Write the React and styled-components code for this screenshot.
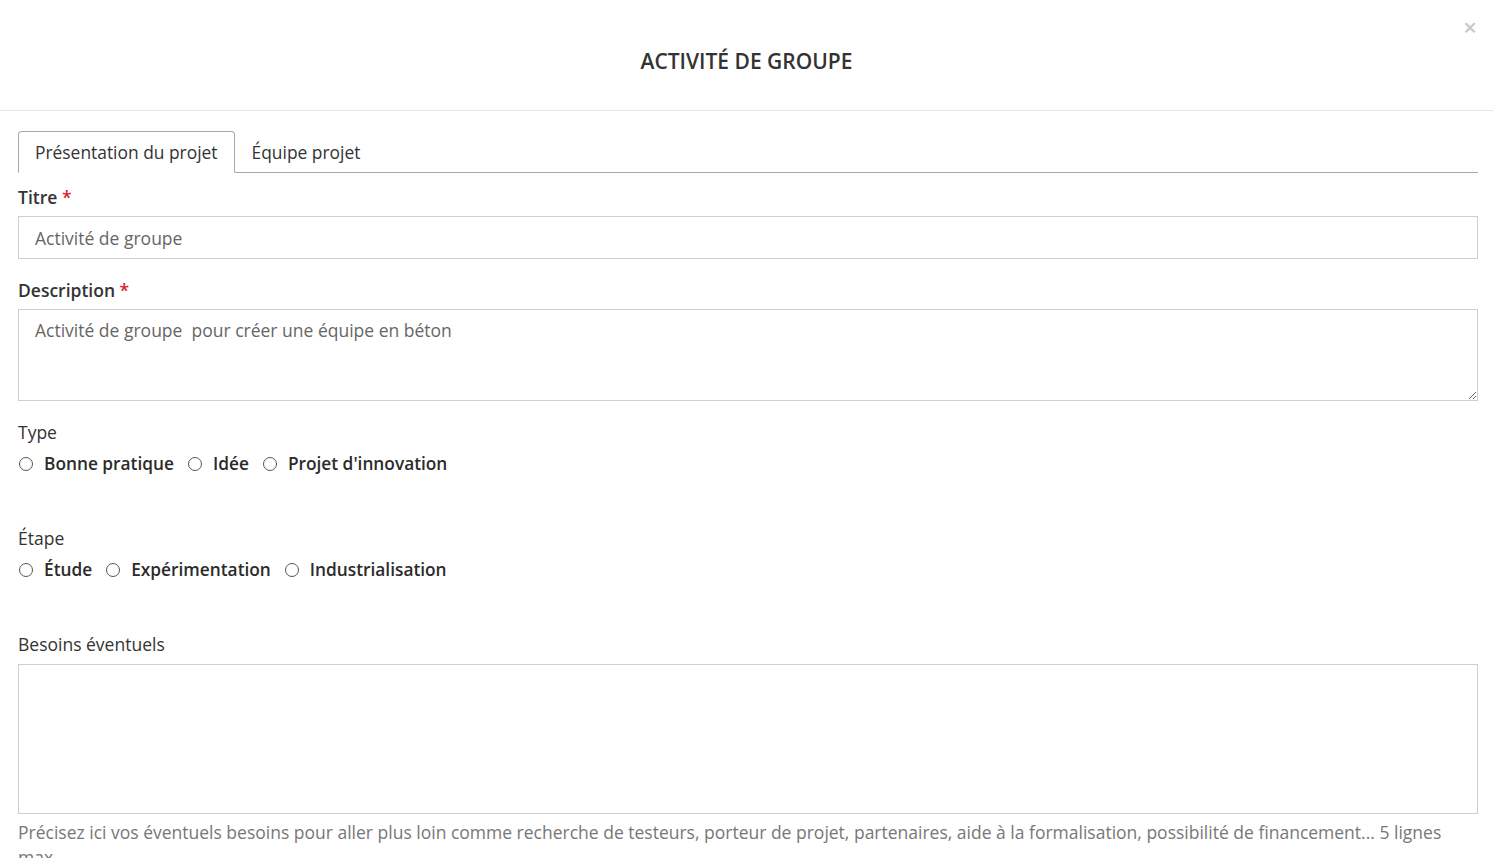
import React from "react";
import styled, { createGlobalStyle } from "styled-components";

const GlobalStyle = createGlobalStyle`
  body {
    margin: 0;
    background: #fff;
    font-family: "Open Sans", "Noto Sans", sans-serif;
    color: #333;
  }
  * { box-sizing: border-box; }
`;

const types = ["Bonne pratique", "Idée", "Projet d'innovation"];
const etapes = ["Étude", "Expérimentation", "Industrialisation"];

function App() {
  return (
    <Modal>
      <GlobalStyle />
      <Header>
        <Title>ACTIVITÉ DE GROUPE</Title>
        <Close>×</Close>
      </Header>
      <Body>
        <Tabs>
          <Tab active>Présentation du projet</Tab>
          <Tab>Équipe projet</Tab>
        </Tabs>

        <Field>
          <Label strong>
            Titre <Req>*</Req>
          </Label>
          <Input defaultValue="Activité de groupe" />
        </Field>

        <Field>
          <Label strong>
            Description <Req>*</Req>
          </Label>
          <TextArea
            h={92}
            defaultValue="Activité de groupe  pour créer une équipe en béton"
          />
        </Field>

        <Field wide>
          <Label>Type</Label>
          <RadioRow>
            {types.map((t) => (
              <RadioItem key={t}>
                <Radio type="radio" name="type" />
                {t}
              </RadioItem>
            ))}
          </RadioRow>
        </Field>

        <Field wide>
          <Label>Étape</Label>
          <RadioRow>
            {etapes.map((t) => (
              <RadioItem key={t}>
                <Radio type="radio" name="etape" />
                {t}
              </RadioItem>
            ))}
          </RadioRow>
        </Field>

        <Field>
          <Label medium gap={8}>
            Besoins éventuels
          </Label>
          <TextArea h={150} noResize />
          <Help>
            Précisez ici vos éventuels besoins pour aller plus loin comme
            recherche de testeurs, porteur de projet, partenaires, aide à la
            formalisation, possibilité de financement... 5 lignes max
          </Help>
        </Field>
      </Body>
    </Modal>
  );
}

const Modal = styled.div`
  position: relative;
  height: 858px;
  overflow: hidden;
`;

const Header = styled.div`
  height: 111px;
  display: flex;
  align-items: center;
  justify-content: center;
  border-bottom: 1px solid #e5e5e5;
`;

const Title = styled.h2`
  margin: 12px 0 0 0;
  font-size: 21px;
  font-weight: 600;
  color: #333;
`;

const Close = styled.span`
  position: absolute;
  top: 10px;
  right: 16px;
  font-size: 24px;
  font-weight: 600;
  color: #c8c8c8;
  line-height: 34px;
`;

const Body = styled.div`
  padding: 20px 15px 0 18px;
`;

const Tabs = styled.div`
  display: flex;
  border-bottom: 1px solid #a9a9a9;
`;

const Tab = styled.div`
  padding: 9px 16px 9px;
  font-size: 17.4px;
  line-height: 22px;
  color: #333;
  border: 1px solid ${(p) => (p.active ? "#a9a9a9" : "transparent")};
  border-bottom-color: ${(p) => (p.active ? "#fff" : "transparent")};
  border-radius: 4px 4px 0 0;
  margin-bottom: -1px;
  background: ${(p) => (p.active ? "#fff" : "transparent")};
`;

const Field = styled.div`
  display: flex;
  flex-direction: column;
  padding-top: 12px;
  margin-bottom: ${(p) => (p.wide ? "38px" : "7px")};
`;

const Label = styled.label`
  font-size: 17.5px;
  line-height: 24px;
  font-weight: ${(p) => (p.strong ? 600 : p.medium ? 500 : 400)};
  color: #333;
  margin-bottom: ${(p) => p.gap || 7}px;
`;

const Req = styled.span`
  color: #d9232d;
`;

const Input = styled.input`
  height: 43px;
  width: 100%;
  border: 1px solid #cfcfcf;
  padding: 0 16px;
  font-family: inherit;
  font-size: 17.5px;
  color: #666;
  outline: none;
`;

const TextArea = styled.textarea`
  height: ${(p) => p.h}px;
  width: 100%;
  border: 1px solid #cfcfcf;
  padding: 8px 16px;
  font-family: inherit;
  font-size: 17.5px;
  line-height: 25px;
  color: #666;
  outline: none;
  resize: ${(p) => (p.noResize ? "none" : "vertical")};
  display: block;
`;

const RadioRow = styled.div`
  display: flex;
  align-items: center;
  gap: 13px;
  padding-top: 1px;
`;

const RadioItem = styled.label`
  display: flex;
  align-items: center;
  gap: 11px;
  font-size: 17.3px;
  line-height: 24px;
  font-weight: 600;
  color: #2b2b2b;
`;

const Radio = styled.input`
  appearance: none;
  margin: 0 0 0 1px;
  width: 14px;
  height: 14px;
  border: 1px solid #555;
  border-radius: 50%;
  background: #fff;
`;

const Help = styled.p`
  margin: 6px 0 0;
  font-size: 17.5px;
  line-height: 25px;
  color: #777;
`;

export default App;
